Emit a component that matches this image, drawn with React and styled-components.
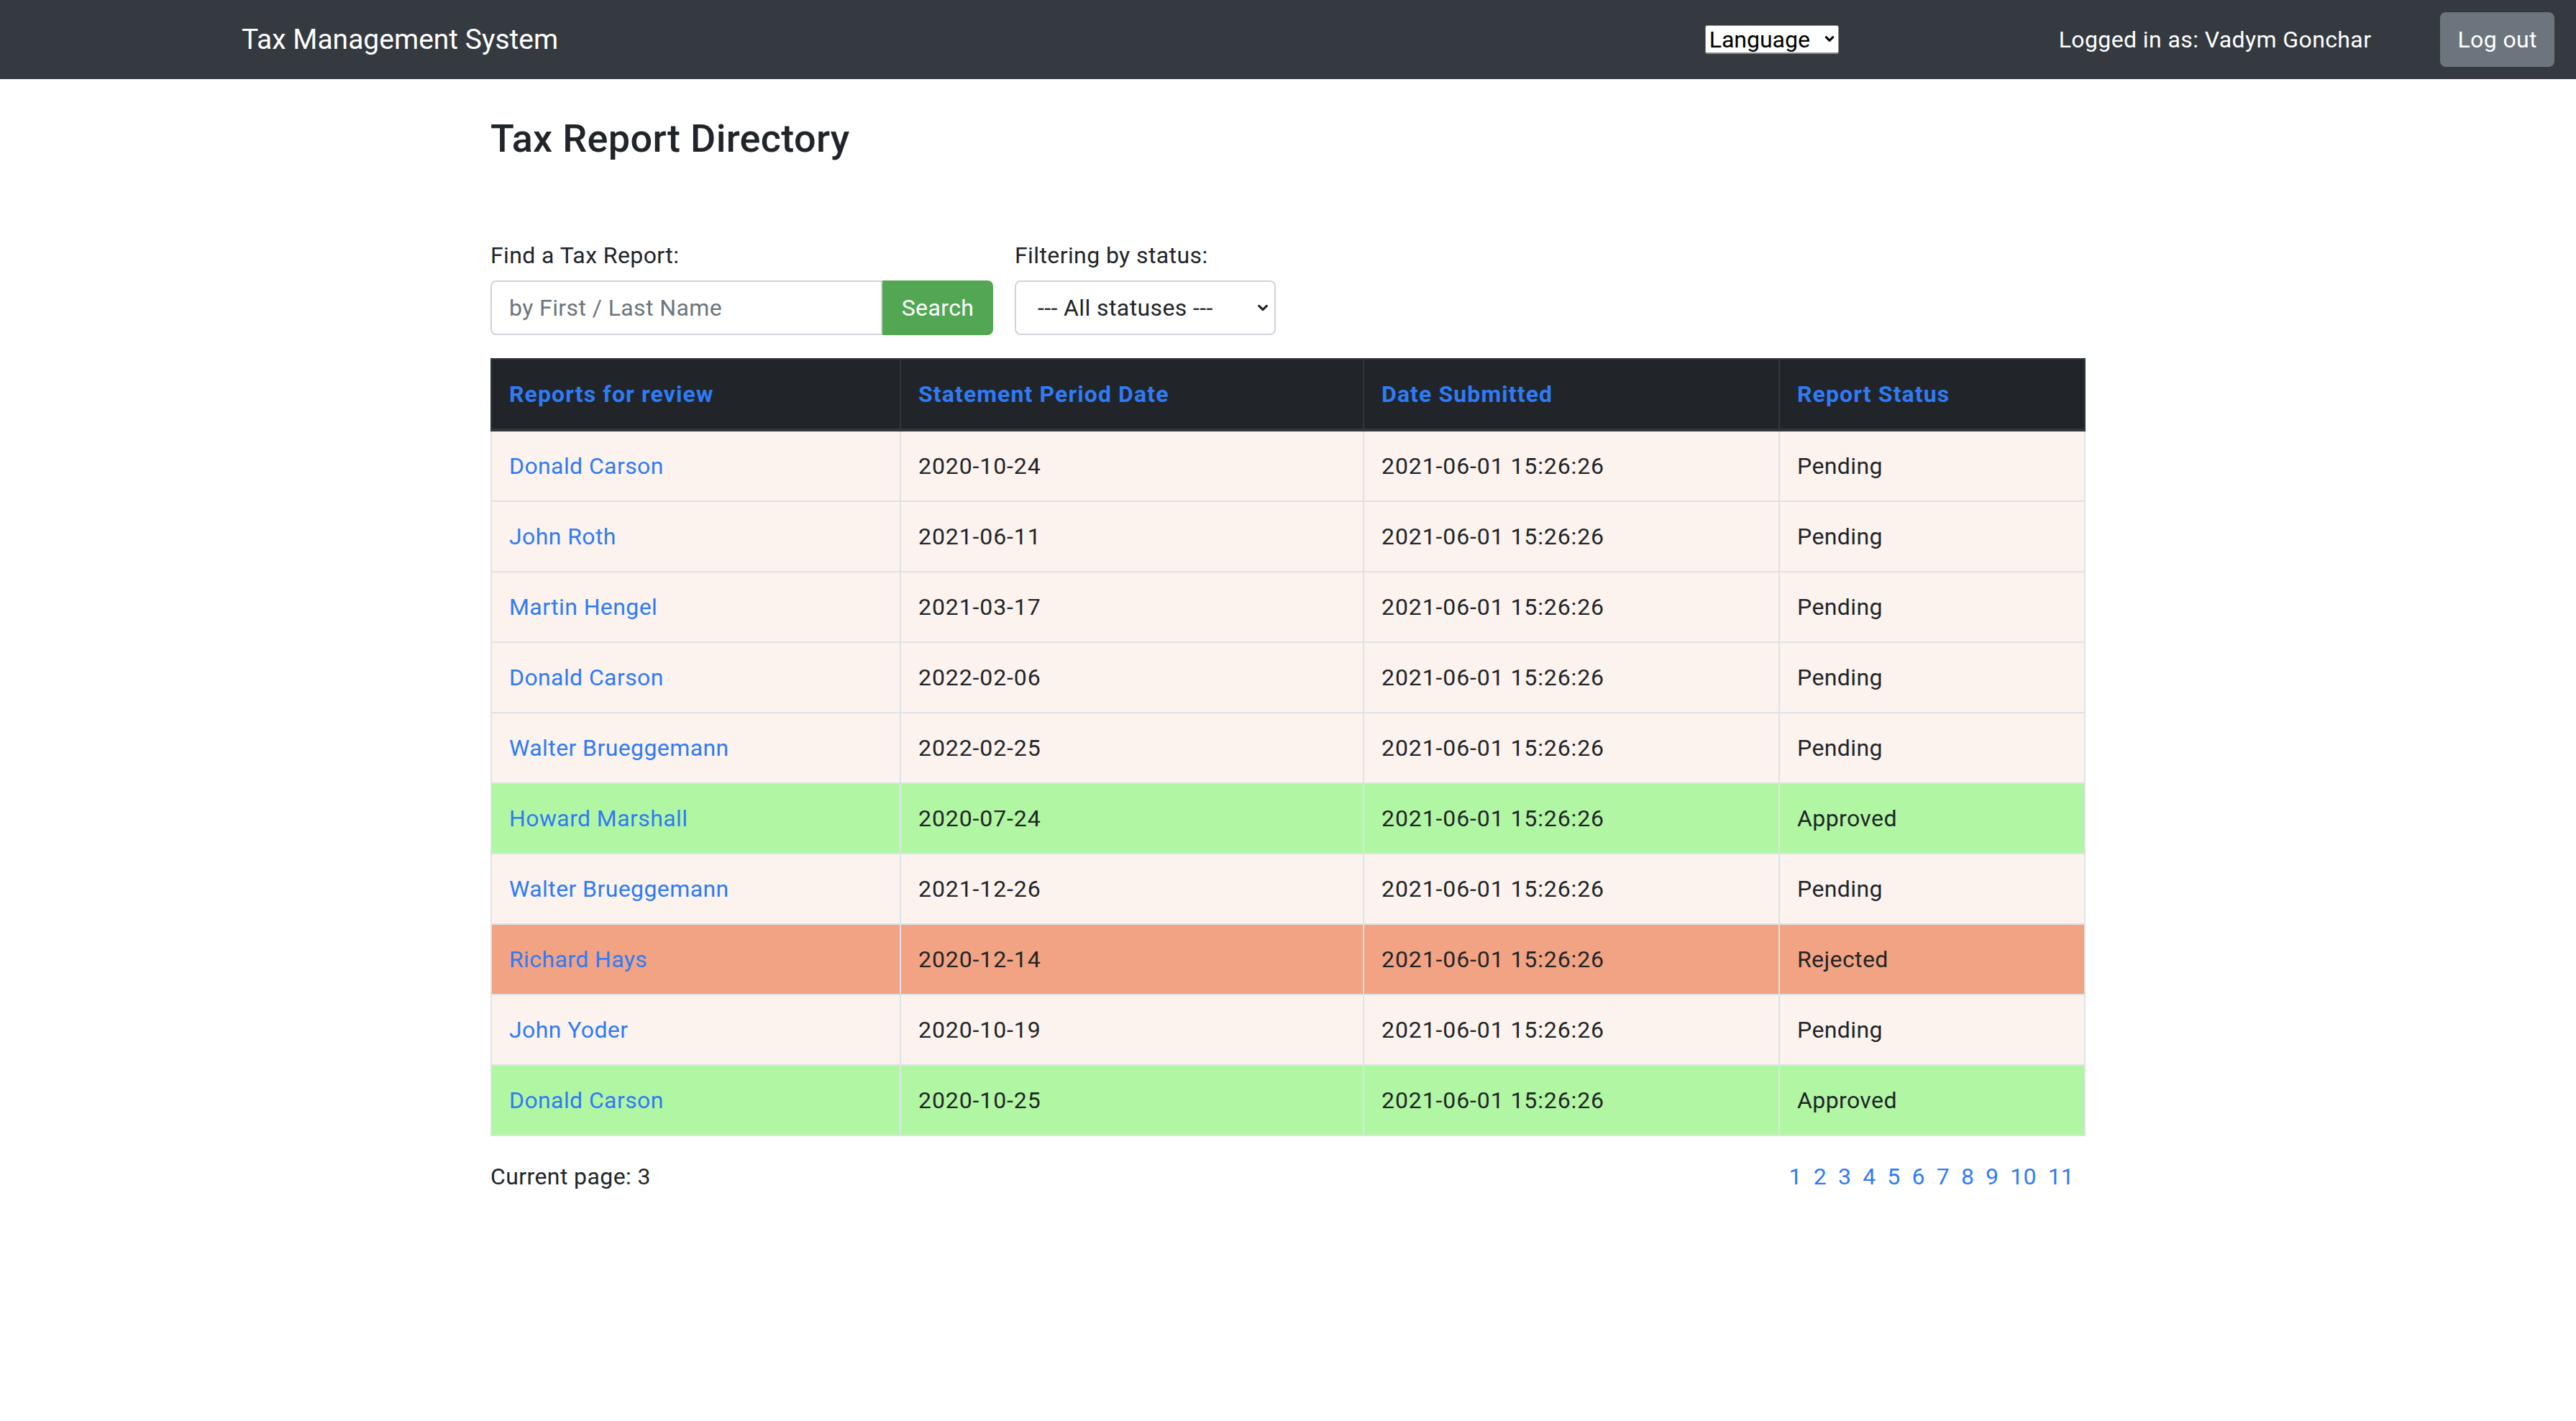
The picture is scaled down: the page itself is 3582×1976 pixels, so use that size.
import React from "react";
import styled, { createGlobalStyle } from "styled-components";

const reports = [
  { name: "Donald Carson", period: "2020-10-24", status: "Pending" },
  { name: "John Roth", period: "2021-06-11", status: "Pending" },
  { name: "Martin Hengel", period: "2021-03-17", status: "Pending" },
  { name: "Donald Carson", period: "2022-02-06", status: "Pending" },
  { name: "Walter Brueggemann", period: "2022-02-25", status: "Pending" },
  { name: "Howard Marshall", period: "2020-07-24", status: "Approved" },
  { name: "Walter Brueggemann", period: "2021-12-26", status: "Pending" },
  { name: "Richard Hays", period: "2020-12-14", status: "Rejected" },
  { name: "John Yoder", period: "2020-10-19", status: "Pending" },
  { name: "Donald Carson", period: "2020-10-25", status: "Approved" },
];

const rowColors = {
  Pending: "#fcf3ee",
  Approved: "#b1f7a3",
  Rejected: "#f1a383",
};

const pages = [1, 2, 3, 4, 5, 6, 7, 8, 9, 10, 11];

function Chevron({ size = 18, weight = 3 }) {
  return (
    <svg width={size} height={size} viewBox="0 0 12 12" fill="none">
      <path
        d="M2 4l4 4 4-4"
        stroke="currentColor"
        strokeWidth={weight}
        strokeLinecap="round"
        strokeLinejoin="round"
      />
    </svg>
  );
}

export default function App() {
  return (
    <>
      <GlobalStyle />
      <Navbar>
        <Brand href="#">Tax Management System</Brand>
        <LangWrap>
          <LangSelect defaultValue="">
            <option value="">Language</option>
            <option value="en">English</option>
            <option value="uk">Українська</option>
          </LangSelect>
          <LangArrow>
            <Chevron size={14} weight={2.6} />
          </LangArrow>
        </LangWrap>
        <UserText>Logged in as: Vadym Gonchar</UserText>
        <LogoutButton>Log out</LogoutButton>
      </Navbar>

      <Container>
        <Title>Tax Report Directory</Title>

        <Filters>
          <FilterGroup>
            <Label>Find a Tax Report:</Label>
            <InputGroup>
              <SearchInput placeholder="by First / Last Name" />
              <SearchButton>Search</SearchButton>
            </InputGroup>
          </FilterGroup>
          <FilterGroup>
            <Label>Filtering by status:</Label>
            <StatusWrap>
              <StatusSelect defaultValue="all">
                <option value="all">--- All statuses ---</option>
                <option value="pending">Pending</option>
                <option value="approved">Approved</option>
                <option value="rejected">Rejected</option>
              </StatusSelect>
              <StatusArrow>
                <Chevron size={16} weight={2.4} />
              </StatusArrow>
            </StatusWrap>
          </FilterGroup>
        </Filters>

        <Table>
          <colgroup>
            <col style={{ width: 569 }} />
            <col style={{ width: 644 }} />
            <col style={{ width: 578 }} />
            <col />
          </colgroup>
          <thead>
            <tr>
              <Th><HeadLink href="#">Reports for review</HeadLink></Th>
              <Th><HeadLink href="#">Statement Period Date</HeadLink></Th>
              <Th><HeadLink href="#">Date Submitted</HeadLink></Th>
              <Th><HeadLink href="#">Report Status</HeadLink></Th>
            </tr>
          </thead>
          <tbody>
            {reports.map((r, i) => (
              <Row key={i} $bg={rowColors[r.status]}>
                <Td><NameLink href="#">{r.name}</NameLink></Td>
                <Td $digits>{r.period}</Td>
                <Td $digits>2021-06-01 15:26:26</Td>
                <Td>{r.status}</Td>
              </Row>
            ))}
          </tbody>
        </Table>

        <Footer>
          <span>Current page: 3</span>
          <Pagination>
            {pages.map((p) => (
              <PageLink key={p} href="#">{p}</PageLink>
            ))}
          </Pagination>
        </Footer>
      </Container>
    </>
  );
}

// Styled Components
const GlobalStyle = createGlobalStyle`
  body {
    margin: 0;
    background: #fff;
    color: #212529;
    font-family: Roboto, "Liberation Sans", Arial, sans-serif;
    font-size: 32px;
    line-height: 48px;
    letter-spacing: 0.4px;
  }
  * {
    box-sizing: border-box;
  }
`;

const Navbar = styled.nav`
  display: flex;
  align-items: center;
  height: 110px;
  padding: 0 30px 0 336px;
  background: #343a40;
`;

const Brand = styled.a`
  color: #fff;
  font-size: 39px;
  line-height: 60px;
  letter-spacing: 0;
  text-decoration: none;
`;

const LangWrap = styled.div`
  position: relative;
  margin-left: auto;
  display: flex;
  align-items: center;
`;

const LangSelect = styled.select`
  appearance: none;
  height: 40px;
  width: 186px;
  padding: 0 28px 0 5px;
  font-family: Roboto, "Liberation Sans", Arial, sans-serif;
  font-size: 32px;
  color: #000;
  background: #fff;
  border: 1px solid #8a8a8a;
  border-bottom-width: 2px;
  border-radius: 3px;
`;

const LangArrow = styled.span`
  position: absolute;
  right: 6px;
  top: 12px;
  display: flex;
  color: #000;
  pointer-events: none;
`;

const UserText = styled.span`
  margin-left: 306px;
  color: #fff;
  font-size: 32px;
`;

const LogoutButton = styled.button`
  margin-left: 96px;
  height: 76px;
  padding: 0 24px;
  border: none;
  border-radius: 8px;
  background: #6c757d;
  color: #fff;
  font-family: inherit;
  font-size: 32px;
  letter-spacing: 0.4px;
`;

const Container = styled.main`
  width: 2218px;
  margin: 0 auto;
`;

const Title = styled.h2`
  margin: 51px 0 0;
  font-size: 54px;
  font-weight: 500;
  line-height: 64px;
  letter-spacing: 0.3px;
`;

const Filters = styled.div`
  display: flex;
  gap: 30px;
  margin-top: 106px;
`;

const FilterGroup = styled.div`
  display: flex;
  flex-direction: column;
`;

const Label = styled.label`
  margin-bottom: 11px;
  font-size: 32px;
  line-height: 48px;
`;

const InputGroup = styled.div`
  display: flex;
  height: 76px;
`;

const SearchInput = styled.input`
  width: 545px;
  height: 100%;
  padding: 0 24px;
  border: 2px solid #ced4da;
  border-radius: 8px 0 0 8px;
  font-family: inherit;
  font-size: 32px;
  letter-spacing: 0.4px;
  color: #495057;
  &::placeholder {
    color: #6c757d;
  }
`;

const SearchButton = styled.button`
  width: 154px;
  height: 100%;
  border: none;
  border-radius: 0 8px 8px 0;
  background: #53a754;
  color: #fff;
  font-family: inherit;
  font-size: 32px;
  letter-spacing: 0.4px;
`;

const StatusWrap = styled.div`
  position: relative;
  width: 363px;
  height: 76px;
`;

const StatusSelect = styled.select`
  appearance: none;
  width: 100%;
  height: 100%;
  padding: 0 40px 0 30px;
  border: 2px solid #ced4da;
  border-radius: 8px;
  background: #fff;
  color: #212529;
  font-family: Roboto, "Liberation Sans", Arial, sans-serif;
  font-size: 32px;
  letter-spacing: 0.4px;
`;

const StatusArrow = styled.span`
  position: absolute;
  right: 10px;
  top: 30px;
  display: flex;
  color: #212529;
  pointer-events: none;
`;

const Table = styled.table`
  width: 100%;
  margin-top: 32px;
  border-collapse: collapse;
  table-layout: fixed;
  border: 2px solid #dee2e6;
`;

const Th = styled.th`
  padding: 24px;
  background: #212529;
  border: 2px solid #32383e;
  border-bottom-width: 4px;
  text-align: left;
  font-weight: 700;
  line-height: 48px;
  letter-spacing: 1.1px;
`;

const HeadLink = styled.a`
  color: #2f7bf6;
  text-decoration: none;
`;

const Row = styled.tr`
  background: ${(p) => p.$bg};
`;

const Td = styled.td`
  padding: 24px;
  border: 2px solid #dee2e6;
  line-height: 48px;
  letter-spacing: ${(p) => (p.$digits ? "0.9px" : "0.4px")};
`;

const NameLink = styled.a`
  color: #2f7bf6;
  text-decoration: none;
`;

const Footer = styled.div`
  display: flex;
  justify-content: space-between;
  margin-top: 32px;
  font-size: 32px;
  line-height: 48px;
`;

const Pagination = styled.div`
  display: flex;
  gap: 16px;
  padding-right: 16px;
  letter-spacing: 0.2px;
`;

const PageLink = styled.a`
  color: #2f7bf6;
  text-decoration: none;
`;
